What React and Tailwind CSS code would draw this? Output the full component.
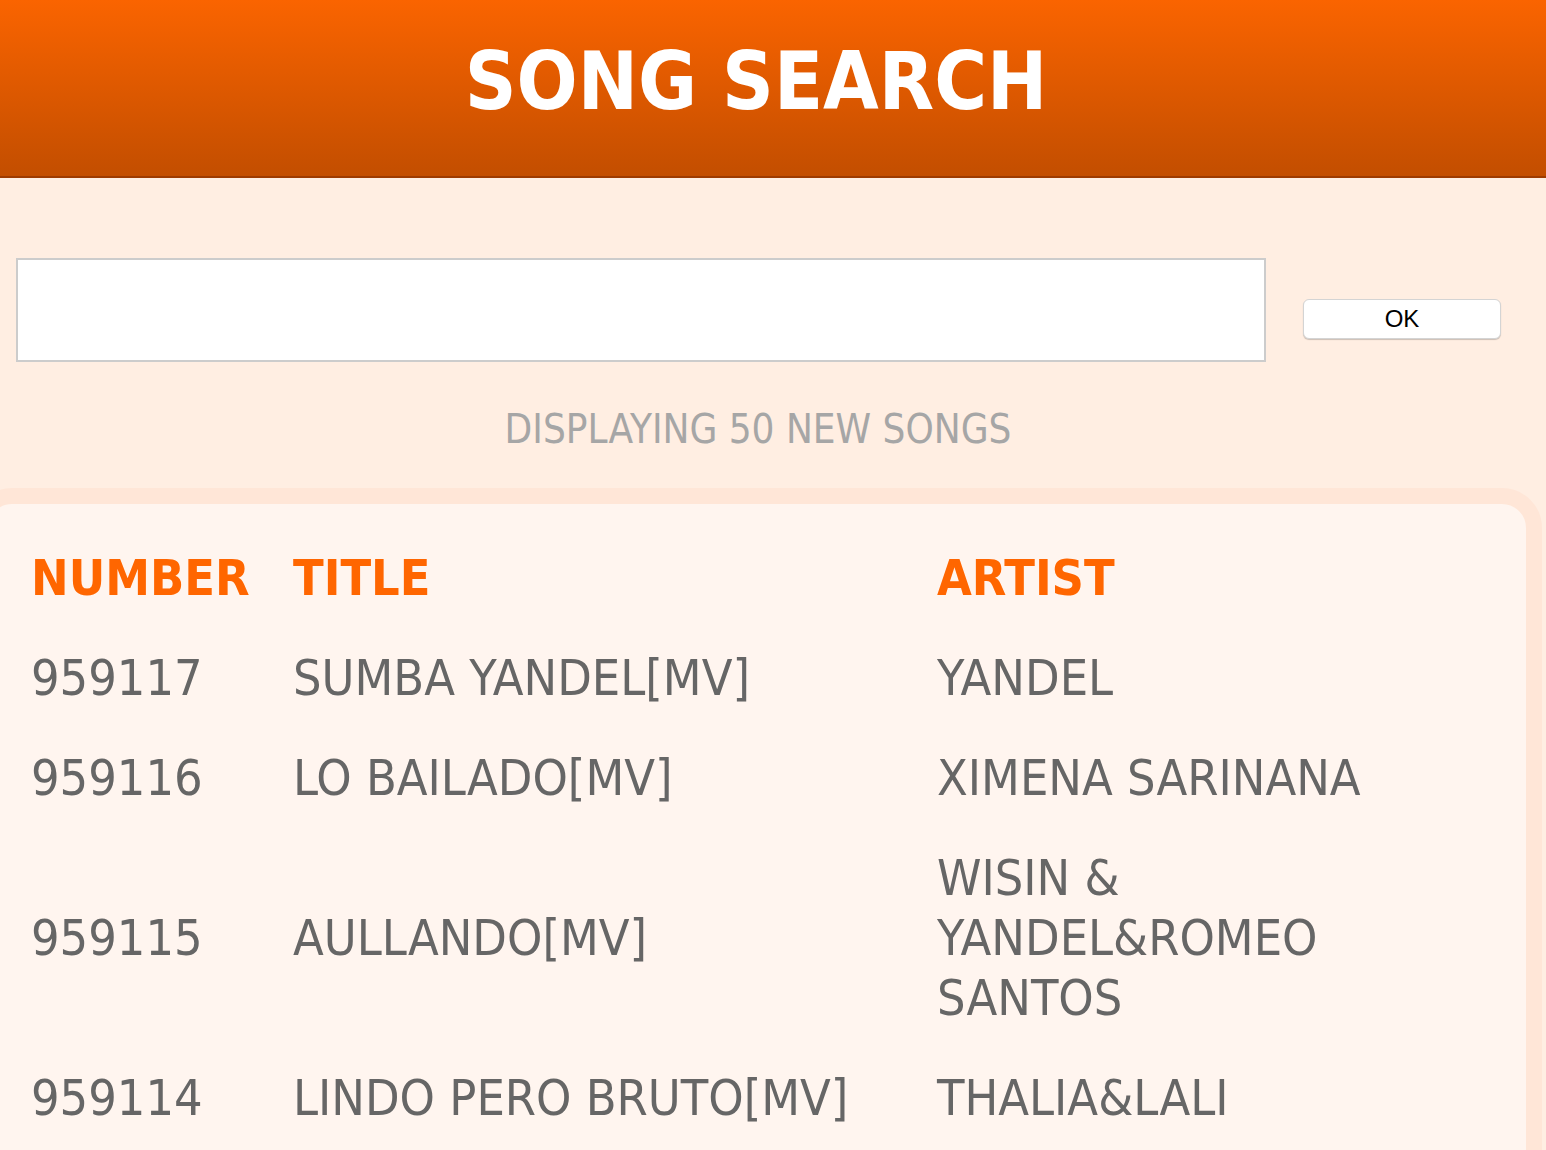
const songs = [
  { number: '959117', title: 'SUMBA YANDEL[MV]', artist: 'YANDEL' },
  { number: '959116', title: 'LO BAILADO[MV]', artist: 'XIMENA SARINANA' },
  { number: '959115', title: 'AULLANDO[MV]', artist: 'WISIN & YANDEL&ROMEO SANTOS' },
  { number: '959114', title: 'LINDO PERO BRUTO[MV]', artist: 'THALIA&LALI' },
];

const font = "font-['DejaVu_Sans_Condensed','DejaVu_Sans','Liberation_Sans',sans-serif]";

export default function App() {
  return (
    <div className={`min-h-[1150px] bg-[#ffeee2] overflow-hidden ${font}`}>
      {/* Header */}
      <header className="h-[178px] bg-gradient-to-b from-[#fa6400] to-[#c34e00] border-b-2 border-[#9e3b00] flex items-center justify-center pr-[34px]">
        <h1 className="text-white font-bold text-[80px] leading-none pb-[12px]">SONG SEARCH</h1>
      </header>

      {/* Search */}
      <div className="flex items-start pl-4 pt-[80px]">
        <input
          type="text"
          className="w-[1250px] h-[104px] bg-white border-2 border-[#cccccc] outline-none"
        />
        <button className="ml-[37px] mt-[41px] w-[198px] h-[40px] bg-white rounded-[6px] border border-[#d4d4d4] shadow-[0_1px_1px_rgba(0,0,0,0.2)] text-[24px] text-black font-['Liberation_Sans',sans-serif]">
          OK
        </button>
      </div>

      <p className="text-center pr-[30px] mt-[42px] text-[40px] leading-[50px] text-[#a6a6a6]">
        DISPLAYING 50 NEW SONGS
      </p>

      {/* Song list */}
      <div className="mt-[34px] ml-[-28px] w-[1570px] border-[16px] border-[#ffe6d7] rounded-[40px] bg-[#fff5ef] pl-[43px] pt-[24px] pb-[40px]">
        <div className="grid grid-cols-[262px_644px_1fr] text-[50px] leading-[60px]">
          <div className="py-5 font-bold text-[#ff6600]">NUMBER</div>
          <div className="py-5 font-bold text-[#ff6600]">TITLE</div>
          <div className="py-5 font-bold text-[#ff6600]">ARTIST</div>
          {songs.map((s) => (
            <div key={s.number} className="contents text-[#666666]">
              <div className="py-5 flex items-center">{s.number}</div>
              <div className="py-5 flex items-center">{s.title}</div>
              <div className="py-5 pr-[160px] flex items-center">{s.artist}</div>
            </div>
          ))}
        </div>
      </div>
    </div>
  );
}
